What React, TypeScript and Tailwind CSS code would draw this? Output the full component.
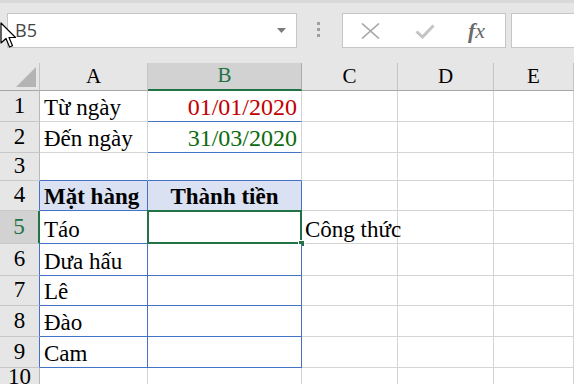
import React from 'react';

const BLUE = '#4472c4';
const GREEN = '#217346';
const GRID = '#d4d4d4';

type Cell = {
  text?: string;
  align?: 'left' | 'right' | 'center';
  color?: string;
  bold?: boolean;
  bg?: string;
  right?: string;
  bottom?: string;
};

const rowHeights = [31, 31, 28, 30, 33, 32, 30, 31, 31, 20];

const rows: Cell[][] = [
  [
    { text: 'Từ ngày' },
    { text: '01/01/2020', align: 'right', color: '#c00000', bottom: BLUE },
  ],
  [
    { text: 'Đến ngày' },
    { text: '31/03/2020', align: 'right', color: '#0b6b0b', bottom: BLUE },
  ],
  [{ bottom: BLUE }, { bottom: BLUE }],
  [
    { text: 'Mặt hàng', bold: true, bg: '#d9e1f2', right: BLUE, bottom: BLUE },
    { text: 'Thành tiền', bold: true, align: 'center', bg: '#d9e1f2', right: BLUE, bottom: BLUE },
  ],
  [{ text: 'Táo', right: BLUE, bottom: BLUE }, { right: BLUE, bottom: BLUE }],
  [{ text: 'Dưa hấu', right: BLUE, bottom: BLUE }, { right: BLUE, bottom: BLUE }],
  [{ text: 'Lê', right: BLUE, bottom: BLUE }, { right: BLUE, bottom: BLUE }],
  [{ text: 'Đào', right: BLUE, bottom: BLUE }, { right: BLUE, bottom: BLUE }],
  [{ text: 'Cam', right: BLUE, bottom: BLUE }, { right: BLUE, bottom: BLUE }],
  [{}, {}],
];

function CursorArrow() {
  return (
    <svg className="absolute left-0 top-[19px]" width="18" height="28" viewBox="0 0 18 28">
      <path d="M1 1 L1 21 L6 16.5 L9.5 25 L12.5 23.8 L9 15.5 L15.5 15.5 Z" fill="#fff" stroke="#000" strokeWidth="1.2" strokeLinejoin="round" />
    </svg>
  );
}

function Toolbar() {
  return (
    <div className="relative h-[63px] bg-[#e6e6e6] border-t-[3px] border-[#d9d9d9] flex items-start pt-[10px]">
      <div className="ml-[7px] w-[290px] h-[35px] bg-white border border-[#c6c6c6] flex items-center justify-between pl-[7px] pr-[10px]">
        <span className="text-[18px] text-[#444] font-['Open_Sans']">B5</span>
        <svg width="9" height="5" viewBox="0 0 9 5">
          <path d="M0 0 L9 0 L4.5 5 Z" fill="#7a7a7a" />
        </svg>
      </div>
      <div className="ml-[20px] mt-[9px] flex flex-col gap-[3px]">
        <div className="w-[3px] h-[3px] bg-[#9f9f9f]" />
        <div className="w-[3px] h-[3px] bg-[#9f9f9f]" />
        <div className="w-[3px] h-[3px] bg-[#9f9f9f]" />
      </div>
      <div className="ml-[22px] w-[164px] h-[35px] bg-white border border-[#c6c6c6] flex items-center">
        <svg className="ml-[18px]" width="19" height="16" viewBox="0 0 19 16">
          <path d="M1 0.5 L18 15.5 M18 0.5 L1 15.5" stroke="#a6a6a6" strokeWidth="1.6" />
        </svg>
        <svg className="ml-[35px] mt-[2px]" width="20" height="15" viewBox="0 0 20 15">
          <path d="M1.5 7.5 L7.5 13 L18.5 1.5" stroke="#c4c4c4" strokeWidth="3" fill="none" />
        </svg>
        <span className="ml-[33px] text-[22px] italic text-[#6a6a6a] leading-none font-['Liberation_Serif']">
          <span className="font-bold">f</span>x
        </span>
      </div>
      <div className="ml-[5px] flex-1 h-[35px] bg-white border border-[#c6c6c6] border-r-0" />
      <CursorArrow />
    </div>
  );
}

function ColumnHeader() {
  const cols = ['A', 'B', 'C', 'D', 'E'];
  return (
    <>
      <div className="h-[28px] bg-[#e6e6e6] border-r border-b border-r-[#c4c4c4] border-b-[#a6a6a6] relative">
        <svg className="absolute left-[16px] top-[4px]" width="21" height="21" viewBox="0 0 21 21">
          <path d="M20 0 L20 20 L0 20 Z" fill="#b4b4b4" />
        </svg>
      </div>
      {cols.map((c) =>
        c === 'B' ? (
          <div
            key={c}
            className="h-[28px] bg-[#d2d2d2] border-r border-r-[#ababab] border-b-2 border-b-[#217346] flex items-center justify-center text-[21px] text-[#217346]"
          >
            {c}
          </div>
        ) : (
          <div
            key={c}
            className="h-[28px] bg-[#e6e6e6] border-r border-r-[#c4c4c4] border-b border-b-[#a6a6a6] flex items-center justify-center text-[21px] text-black"
          >
            {c}
          </div>
        )
      )}
    </>
  );
}

export default function App() {
  return (
    <div className="w-[574px] h-[384px] overflow-hidden bg-white">
      <Toolbar />
      <div className="grid grid-cols-[40px_108px_154px_96px_96px_1fr] font-['Liberation_Serif']">
        <ColumnHeader />
        {rows.map((r, i) => {
          const h = rowHeights[i];
          const selected = i === 4;
          const inTable = i >= 3 && i <= 8;
          return (
            <React.Fragment key={i}>
              <div
                className={
                  selected
                    ? 'bg-[#d2d2d2] border-r-2 border-b border-b-[#c8c8c8] flex items-center justify-center text-[23px] text-[#217346]'
                    : 'bg-[#e6e6e6] border-r border-b border-b-[#c8c8c8] flex items-center justify-center text-[23px] text-black'
                }
                style={{ height: h, borderRightColor: selected ? GREEN : inTable ? BLUE : '#b9b9b9' }}
              >
                {i + 1}
              </div>
              {r.map((c, j) => (
                <div
                  key={j}
                  className={
                    'relative border-r border-b flex items-end pb-[2px] leading-none whitespace-nowrap ' +
                    (c.align === 'right' ? 'justify-end pr-[4px] text-[24px] ' : c.align === 'center' ? 'justify-center text-[23px] ' : 'pl-[4px] text-[23px] ') +
                    (c.bold ? 'font-bold' : '')
                  }
                  style={{
                    height: h,
                    color: c.color ?? '#000',
                    background: c.bg ?? '#fff',
                    borderRightColor: c.right ?? GRID,
                    borderBottomColor: c.bottom ?? GRID,
                  }}
                >
                  {c.text}
                  {selected && j === 1 && (
                    <>
                      <div className="absolute left-[-1px] top-[-1px] right-[-1px] bottom-[-1px] border-2 border-[#217346]" />
                      <div className="absolute right-[-4px] bottom-[-4px] w-[7px] h-[7px] bg-[#217346] border border-white" />
                    </>
                  )}
                </div>
              ))}
              <div
                className="border-r border-b pl-[3px] flex items-end pb-[2px] text-[23px] leading-none whitespace-nowrap"
                style={{ height: h, borderRightColor: GRID, borderBottomColor: GRID }}
              >
                {selected ? 'Công thức' : ''}
              </div>
              <div className="border-r border-b" style={{ height: h, borderColor: GRID }} />
              <div className="border-r border-b" style={{ height: h, borderColor: GRID }} />
            </React.Fragment>
          );
        })}
      </div>
    </div>
  );
}
